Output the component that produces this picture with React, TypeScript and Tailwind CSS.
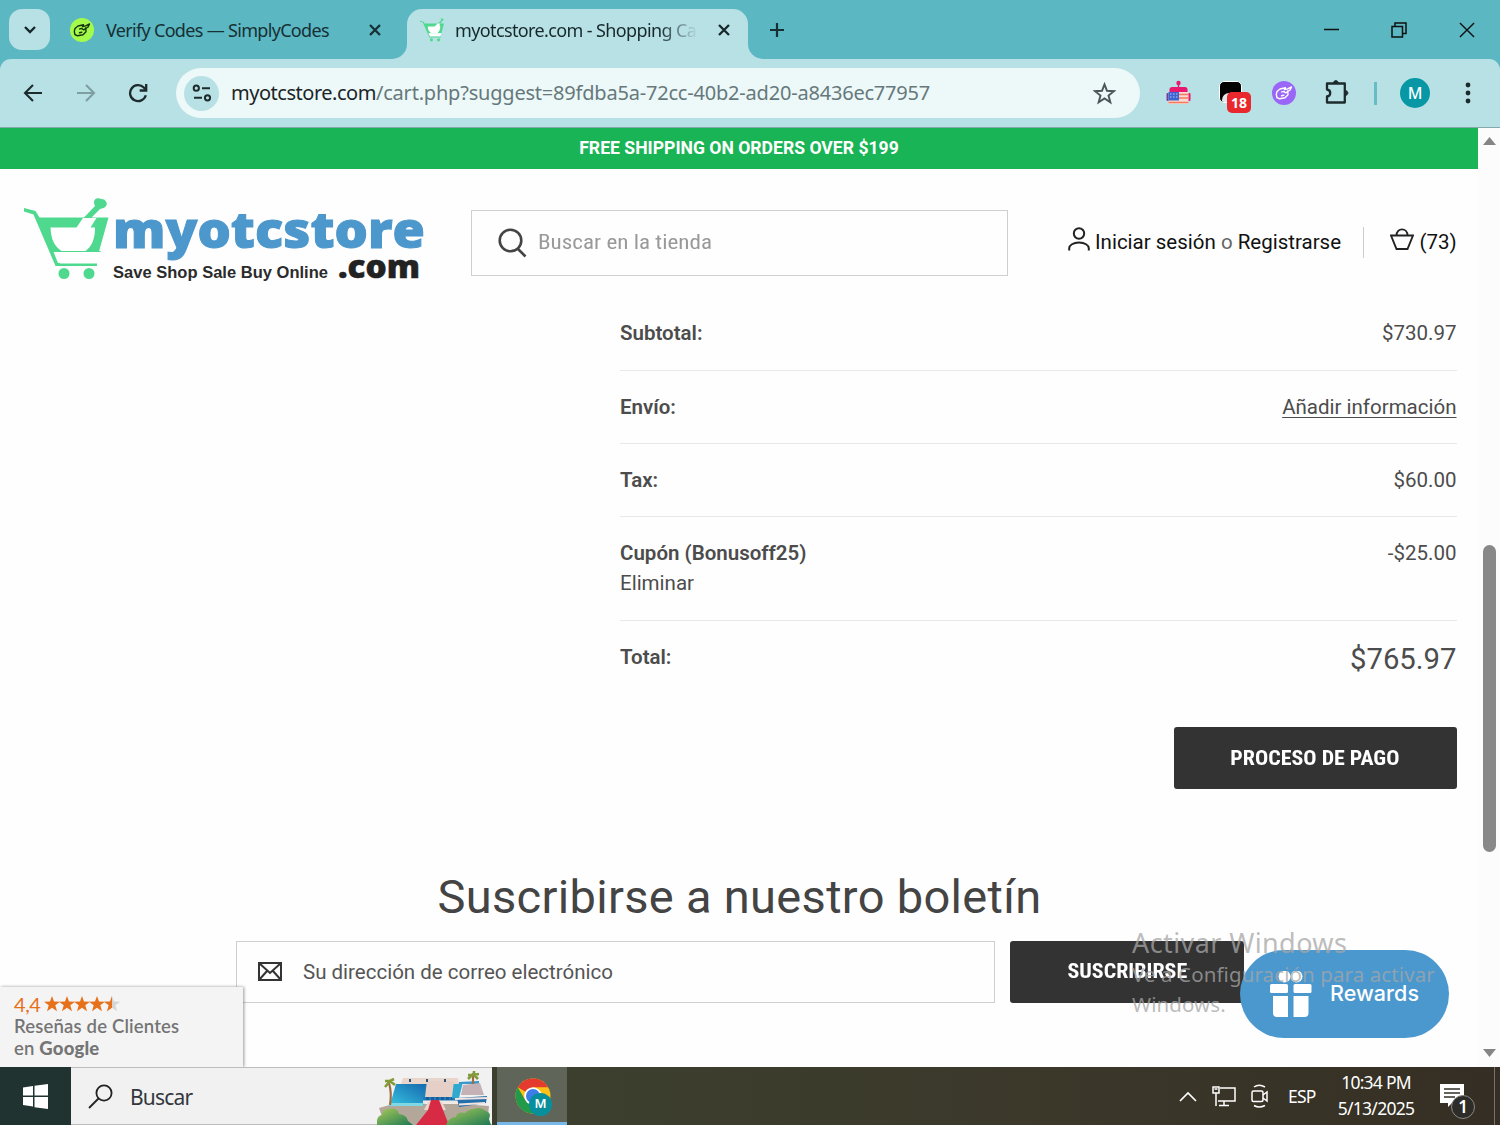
import React from "react";

const ui = "font-['Noto_Sans',sans-serif]";

function Hand({ className, color }: { className?: string; color: string }) {
  return (
    <svg viewBox="0 0 24 24" className={className} fill="none" stroke={color} strokeWidth="1.400" strokeLinejoin="round" strokeLinecap="round">
      <path d="M5 10.500 8 8l5.500-1.200-1 1.900 3.200-.9L19.500 6l-1.400 3-2.300 1.500.2 3.300-3 3-5.400 1-2.700-1.300-.6-3.200z" />
      <path d="M9.500 11c1.300-.8 2.900-.4 3.500.4s2.100.1 2.500-1.400M9.500 14.800l2.300-.6" />
    </svg>
  );
}

function Cart({ className }: { className?: string }) {
  return (
    <svg viewBox="0 0 84 84" className={className}>
      <path d="M0 10 12 13.500 16 19.500H62L75 8C70 4 73 0 78 1.500 84 3 84 8 79 10L71 19.500H84L75 53H30L35 65H73V68.500H33L10 16 0 13.500Z" fill="#4fd98f" />
      <path d="M27 29.500H51L62 19.500H71C67 25 68 28 71 29.500 71 40 68 47 61 53H40C31 48 28 41 27 29.500Z" fill="#fff" />
      <path d="M29.500 53.500H75L71 64H35Z" fill="#fff" />
      <circle cx="40" cy="76.500" r="5.500" fill="#4fd98f" />
      <circle cx="65" cy="76.500" r="5.500" fill="#4fd98f" />
    </svg>
  );
}

function Logo() {
  return (
    <svg width="404" height="92" viewBox="0 0 404 92" className="shrink-0">
      <g fill="#4fd98f">
        <path d="M0 11 11.500 14 15.500 20.500H60L71 9C68.500 4 71 1 74.500 1.200L80 2.500C84 5 83.500 9 79.500 11L76 12 67.500 20.500H84.500L75 54.500H32L36 66.500H73V69H31.500L9.500 17.500 0 14.500Z" />
        <circle cx="40" cy="76.500" r="5.500" />
        <circle cx="65" cy="76.500" r="5.500" />
      </g>
      <path d="M26.500 30.500H52.500L59 21H72.500L66.500 30.500H71C71 41 68.500 49 61 54.500H38C30 49 27 42 26.500 30.500Z" fill="#fff" />
      <path d="M29.500 55H75.500L72.500 66H34Z" fill="#fff" />
      <path d="M29 54.500H76.500" stroke="#4fd98f" strokeWidth="1" />
      <text x="89" y="50.500" textLength="312" lengthAdjust="spacingAndGlyphs" fill="#4c97cc" stroke="#4c97cc" strokeWidth="1" className="font-['Open_Sans',sans-serif] text-[50px] font-extrabold">myotcstore</text>
      <text x="89" y="81" textLength="215" lengthAdjust="spacing" fill="#2b2b2b" className="font-['Liberation_Sans',sans-serif] text-[16.500px] font-bold">Save Shop Sale Buy Online</text>
      <text x="314" y="81" textLength="82" lengthAdjust="spacingAndGlyphs" fill="#222" stroke="#222" strokeWidth="0.500" className="font-['Open_Sans',sans-serif] text-[31px] font-extrabold">.com</text>
    </svg>
  );
}

function BrowserTabs() {
  return (
    <div className="flex h-[59px] bg-[#b8e1e5]">
      <div className="flex w-[407px] items-center rounded-br-[15px] bg-[#5bb7c2] pl-[9px]">
        <div className="flex h-[41px] w-[41px] items-center justify-center rounded-[13px] bg-[#b8e1e5]">
          <svg width="14" height="10" viewBox="0 0 14 10" fill="none" stroke="#16282b" strokeWidth="2.400"><path d="m2 2 5 5 5-5" /></svg>
        </div>
        <div className="ml-[20px] h-6 w-6 rounded-full bg-[#a3fb4b]"><Hand className="h-6 w-6" color="#17340f" /></div>
        <span className="ml-[12px] w-[262px] whitespace-nowrap pt-[2px] text-[18px] tracking-[-0.680px] text-[#173034]">Verify Codes — SimplyCodes</span>
        <svg width="14" height="14" viewBox="0 0 14 14" stroke="#173034" strokeWidth="2.300"><path d="m2 2 10 10M12 2 2 12" /></svg>
      </div>
      <div className="w-[341px] bg-[linear-gradient(#5bb7c2_50%,#b8e1e5_50%)] pt-[9px]">
        <div className="flex h-[50px] items-center rounded-t-[15px] bg-[#b8e1e5] pb-[8px] pl-[13px]">
          <Cart className="h-6 w-6" />
          <span className="ml-[11px] w-[243px] overflow-hidden whitespace-nowrap pt-px text-[18px] tracking-[-0.620px] text-[#16282b] [mask-image:linear-gradient(to_right,#000_84%,transparent_100%)]">myotcstore.com - Shopping Cart</span>
          <svg className="ml-[19px]" width="14" height="14" viewBox="0 0 14 14" stroke="#16282b" strokeWidth="2.300"><path d="m2 2 10 10M12 2 2 12" /></svg>
        </div>
      </div>
      <div className="flex flex-1 items-center rounded-bl-[15px] bg-[#5bb7c2] pl-[21px] pr-[25px]">
        <svg width="16" height="16" viewBox="0 0 16 16" stroke="#173034" strokeWidth="2.200"><path d="M8 1v14M1 8h14" /></svg>
        <div className="ml-auto flex items-center gap-[52px]">
          <svg width="16" height="16" viewBox="0 0 16 16" stroke="#111" strokeWidth="1.500"><path d="M1 7.500h15" /></svg>
          <svg width="16" height="16" viewBox="0 0 16 16" fill="none" stroke="#111" strokeWidth="1.500"><path d="M1 4.500h10.500V15H1zM4 4.500V1h11v10.500h-3.500" /></svg>
          <svg width="16" height="16" viewBox="0 0 17 17" stroke="#111" strokeWidth="1.500"><path d="m1 1 15 15M16 1 1 16" /></svg>
        </div>
      </div>
    </div>
  );
}

function Toolbar() {
  return (
    <div className="bg-[#5bb7c2]">
      <div className="flex h-[69px] items-center rounded-t-[11px] border-b border-[#86a9ab] bg-[#b8e1e5] pl-[23px]">
        <svg width="20" height="18" viewBox="0 0 20 18" fill="none" stroke="#1d2b2d" strokeWidth="2.100"><path d="M19 9H2.500M10 1 2 9l8 8" /></svg>
        <svg className="ml-[33px]" width="20" height="18" viewBox="0 0 20 18" fill="none" stroke="#7f9ea2" strokeWidth="2.100"><path d="M1 9h16.500M10 1l8 8-8 8" /></svg>
        <svg className="ml-[32px]" width="20" height="20" viewBox="0 0 20 20" fill="none" stroke="#1d2b2d" strokeWidth="2.300"><path d="M17.800 12.300A8 8 0 1 1 15.800 4.500L18 7" /><path d="M18.200 1v6.500h-6.500" /></svg>
        <div className="ml-[28px] flex h-[50px] w-[964px] items-center rounded-full bg-[#edf8f9] pl-[8px]">
          <div className="flex h-[35px] w-[35px] items-center justify-center rounded-full bg-[#b8e1e5]">
            <svg width="20" height="18" viewBox="0 0 20 18" fill="none" stroke="#1d2b2d" strokeWidth="2"><circle cx="4.300" cy="4.200" r="2.600" /><path d="M10 4.200h8M2 13.800h8" /><circle cx="15.500" cy="13.800" r="2.600" /></svg>
          </div>
          <span className="ml-[12px] w-[862px] whitespace-nowrap text-[20px] tracking-[-0.260px] text-[#66787b]"><span className="tracking-[-0.480px] text-[#1b2527]">myotcstore.com</span><span className="tracking-[-0.200px]">/cart.php?suggest=89fdba5a-72cc-40b2-ad20-a8436ec77957</span></span>
          <svg width="23" height="23" viewBox="0 0 24 24" fill="none" stroke="#4c5558" strokeWidth="2"><path d="m12 2.500 2.600 6.700 7.200.4-5.600 4.500 1.900 7-6.100-4-6.100 4 1.900-7-5.600-4.500 7.200-.4z" /></svg>
        </div>
        <svg className="ml-[26px]" width="25" height="26" viewBox="0 0 25 26">
          <circle cx="12.500" cy="3" r="2.200" fill="#e8196f" /><path d="M11.800 3h1.400v5h-1.400z" fill="#e8196f" />
          <path d="M3.500 12V9.500Q3.500 7 6 7H19q2.500 0 2.500 2.500V12z" fill="#e8196f" />
          <rect x=".5" y="13" width="3" height="8" rx="1" fill="#7b3d9c" /><rect x="21.500" y="13" width="3" height="8" rx="1" fill="#e8196f" />
          <path d="M2.500 12h20v12h-20z" fill="#f8d9d4" /><path d="M13 14.500h9.500M13 18h9.500M2.500 22.500h20" stroke="#f07c5c" strokeWidth="1.700" />
          <path d="M2.500 12H13v8.500H2.500z" fill="#3d63d0" /><path d="M4 14h8M4 17h8" stroke="#b9c9f4" strokeDasharray="1.500 1.500" />
        </svg>
        <div className="relative ml-[28px] h-6 w-6">
          <div className="h-[22px] w-[23px] overflow-hidden rounded-[5px] border border-white bg-black"><div className="mt-[11px] ml-[2px] h-[14px] w-[22px] rounded-full bg-[#e2e7e7]" /></div>
          <div className="absolute left-[8px] top-[11px] flex h-[21px] w-[24px] items-center justify-center rounded-[5px] bg-[#e9282e] text-[14px] font-bold text-white">18</div>
        </div>
        <div className="ml-[29px] h-6 w-6 rounded-full bg-[#9a66f8]"><Hand className="h-6 w-6" color="#fff" /></div>
        <svg className="ml-[28px] mb-[3px]" width="26" height="26" viewBox="0 0 26 26" fill="none" stroke="#1d2b2d" strokeWidth="2.300" strokeLinejoin="round"><path d="M3 4.500H20.800V23.500H3v-6c4.300-.5 4.300-6.500 0-7z" /><path d="M9.500 4c.2-3.200 4.500-3.200 4.700 0zM21.300 11.500c3.400.4 3.400 4.600 0 5z" fill="#1d2b2d" strokeWidth="1" /></svg>
        <div className="ml-[24px] h-[23px] w-[3px] bg-[#65bdc6]" />
        <div className="ml-[23px] flex h-[30px] w-[30px] items-center justify-center rounded-full bg-[#0797a5] text-[16px] font-medium text-white">M</div>
        <svg className="ml-[35px]" width="6" height="22" viewBox="0 0 6 22" fill="#1d2b2d"><circle cx="3" cy="3" r="2.400" /><circle cx="3" cy="11" r="2.400" /><circle cx="3" cy="19" r="2.400" /></svg>
      </div>
    </div>
  );
}

function StoreHeader() {
  return (
    <div className="flex h-[128px] pl-[24px]">
      <div className="pt-[28px]"><Logo /></div>
      <div className="ml-[43px] mt-[41px] flex h-[66px] w-[537px] items-center border-[1.5px] border-[#cfcfcf] pl-[26px]">
        <svg width="29" height="30" viewBox="0 0 29 30" fill="none" stroke="#444" strokeWidth="2.600"><circle cx="12.500" cy="12.500" r="10.800" /><path d="m20 21 7.500 7.500" /></svg>
        <span className="ml-[11px] origin-left scale-x-[1.1] whitespace-nowrap text-[21px] text-[#999] [font-stretch:75%]">Buscar en la tienda</span>
      </div>
      <div className="ml-[60px] flex h-[146px] items-center text-[20.500px] text-[#111]">
        <svg className="mb-[6px]" width="22" height="24" viewBox="0 0 22 24" fill="none" stroke="#222" strokeWidth="2"><circle cx="11" cy="6.500" r="5.200" /><path d="M1.200 23.500v-2.200c0-3 4-5.800 9.800-5.800s9.800 2.800 9.800 5.800v2.200" /></svg>
        <span className="ml-[5px] w-[247px] whitespace-nowrap">Iniciar sesión <span className="text-[#666]">o</span> Registrarse</span>
        <div className="ml-[21px] h-[31px] w-px bg-[#ccc]" />
        <svg className="ml-[26px] mb-[6px]" width="24" height="22" viewBox="0 0 24 22" fill="none" stroke="#222" strokeWidth="1.900"><path d="M1 7.500h22L17.500 21h-11zM6.500 7.500C6.500-.700 17.500-.700 17.500 7.500" /></svg>
        <span className="ml-[5.500px]">(73)</span>
      </div>
    </div>
  );
}

function Row({ label, children, last }: { label: string; children: React.ReactNode; last?: boolean }) {
  return (
    <div className={last ? "flex h-[72px] items-center justify-between" : "flex h-[73.400px] items-center justify-between border-b-[1.500px] border-[#e9e9e9]"}>
      <b className="font-semibold">{label}</b>
      {children}
    </div>
  );
}

function Totals() {
  return (
    <div className="ml-[620px] w-[836.500px] pt-[0.300px] text-[20.500px] leading-[30px] text-[#4c4c4c]">
      <Row label="Subtotal:"><span>$730.97</span></Row>
      <Row label="Envío:"><span className="underline decoration-1 underline-offset-[3px]">Añadir información</span></Row>
      <Row label="Tax:"><span>$60.00</span></Row>
      <div className="flex h-[104px] justify-between border-b-[1.500px] border-[#e9e9e9] pt-[20.500px]">
        <div><b className="block font-semibold">Cupón (Bonusoff25)</b><span className="block pt-[0.500px]">Eliminar</span></div>
        <span>-$25.00</span>
      </div>
      <Row label="Total:" last><span className="pt-[3px] text-[29.300px]">$765.97</span></Row>
      <div className="mt-[33.500px] ml-auto flex h-[62px] w-[283px] items-center justify-center rounded-[3px] bg-[#333]">
        <span className="scale-x-[1.045] whitespace-nowrap text-[21px] font-bold text-white [font-stretch:75%]">PROCESO DE PAGO</span>
      </div>
    </div>
  );
}

function Newsletter() {
  return (
    <div className="mt-[78px]">
      <h2 className="h-[60px] pl-px text-center text-[47px] leading-[60px] tracking-[0.320px] text-[#444]">Suscribirse a nuestro boletín</h2>
      <div className="mt-[14px] flex pl-[236px]">
        <div className="flex h-[62px] w-[759px] items-center border-[1.500px] border-[#cfcfcf] pl-[21px]">
          <svg width="24" height="19" viewBox="0 0 24 19" fill="none" stroke="#333" strokeWidth="2"><path d="M1 1h22v17H1zM1 1l11 10L23 1M1 18l8-9M23 18l-8-9" /></svg>
          <span className="ml-[21px] text-[20.500px] text-[#555]">Su dirección de correo electrónico</span>
        </div>
        <div className="ml-[15px] flex h-[62px] w-[234px] items-center justify-center rounded-[3px] bg-[#333] text-[21px] font-bold text-white [font-stretch:75%]"><span className="scale-x-[1.045]">SUSCRIBIRSE</span></div>
      </div>
    </div>
  );
}

function ReviewsBadge() {
  const star = "m8 0 2 5.600 6 .100-4.700 3.600 1.700 5.900L8 11.700l-5 3.500 1.700-5.900L0 5.700l6-.1z";
  return (
    <div className="absolute bottom-0 left-0 h-[80px] w-[243px] bg-[#f4f4f4] pl-[14px] pt-[6px] font-['Lato',sans-serif] text-[#757575] shadow-[1px_0_3px_rgba(0,0,0,0.4)]">
      <div className="flex h-[22px] items-center text-[20px] text-[#e7711b]">
        <span className="w-[30px] tracking-[-0.400px]">4,4</span>
        <svg width="76" height="16" viewBox="0 0 76 16" fill="#e7711b">
          <path d={star} /><path d={star} transform="translate(15)" /><path d={star} transform="translate(30)" /><path d={star} transform="translate(45)" />
          <path d={star} transform="translate(60)" fill="#d5d5d5" /><path d="m68 0v11.700l-5 3.500 1.700-5.900L60 5.700l6-.1z" />
        </svg>
      </div>
      <div className="whitespace-nowrap text-[18.500px] font-semibold leading-[22px] tracking-[0.170px]">Reseñas de Clientes<br />en <b>Google</b></div>
    </div>
  );
}

function Overlays() {
  return (
    <>
      <ReviewsBadge />
      <div className="absolute left-[1240px] top-[822px] flex h-[88px] w-[209px] items-center rounded-full bg-[#4b98cf] pl-[30px]">
        <svg width="42" height="46" viewBox="0 0 42 46" fill="#fff"><circle cx="14.500" cy="5.500" r="6" /><circle cx="26.500" cy="5.500" r="6" /><rect y="13" width="18" height="9" rx="1.500" /><rect x="23.500" y="13" width="18" height="9" rx="1.500" /><path d="M3 25h15v21H7q-4 0-4-4zM23.500 25h15v17q0 4-4 4h-11z" /></svg>
        <span className="ml-[18px] pb-[2px] font-['Inter',sans-serif] text-[21.500px] font-medium tracking-[0.050px] text-white">Rewards</span>
      </div>
      <div className="absolute left-[1132px] top-[799px] whitespace-nowrap font-['Noto_Sans',sans-serif] text-[#a6a6a6]/75">
        <div className="text-[27px] leading-[31px] tracking-[0.400px]">Activar Windows</div>
        <div className="pt-[2px] text-[20.500px] leading-[29.500px] tracking-[0.100px]">Ve a Configuración para activar<br />Windows.</div>
      </div>
    </>
  );
}

function Scrollbar() {
  return (
    <div className="flex w-[22px] flex-col items-center bg-[#fcfcfc] pt-[9px] pb-[10px]">
      <svg width="13" height="8" viewBox="0 0 13 8" fill="#858585"><path d="M0 8 6.500 0 13 8z" /></svg>
      <div className="mt-[400px] h-[307px] w-[13px] rounded-full bg-[#888]" />
      <svg className="mt-auto" width="13" height="8" viewBox="0 0 13 8" fill="#858585"><path d="M0 0 6.500 8 13 0z" /></svg>
    </div>
  );
}

function Villa() {
  return (
    <svg width="115" height="54" viewBox="0 0 115 54">
      <defs>
        <linearGradient id="pool" x1="0" y1="1" x2="1" y2="0"><stop offset="0" stopColor="#36c2df" /><stop offset="1" stopColor="#1466ad" /></linearGradient>
        <linearGradient id="bush" x1="0" y1="0" x2="1" y2="1"><stop offset="0" stopColor="#a9c957" /><stop offset="1" stopColor="#1d7a55" /></linearGradient>
      </defs>
      <path d="M2 37 16 33H84L112 35 110 54H8z" fill="#b3a79a" />
      <path d="M19 13H51L47 34H13z" fill="url(#pool)" />
      <path d="M13 32H47L46 35H12z" fill="#7fd8e4" />
      <path d="M48 14H82L81 30H46z" fill="#1f7cb8" /><path d="M76 13 86 11 82 27H74z" fill="#2fa9cf" />
      <path d="M26 7H81L82 13H24z" fill="#ead5cb" /><path d="M50 10H77L75 26H48z" fill="#e6cfc6" />
      <path d="M33 8v3M50 8v3M68 8v3" stroke="#26547e" strokeWidth="2" />
      <path d="M49 27.500H75" stroke="#1a5d9c" strokeWidth="3" strokeDasharray="3 2" />
      <path d="M46 31H82" stroke="#f3e7e2" strokeWidth="3" />
      <path d="M82 11 102 10V13H82z" fill="#3b98cb" /><path d="M86 14 103 12 107 24H84z" fill="#c5b2b7" />
      <path d="M80 27 110 25 109 32 82 36z" fill="#236fac" /><path d="M78 28 111 27M82 33.500 108 32" stroke="#f2e3de" strokeWidth="2" />
      <path d="M51 31H65L69 39H47z" fill="#ead5cb" /><path d="M54 29H62L72 54H39L51 39z" fill="#d72b45" />
      <path d="M13 34Q15 22 12 12M96 13V5" stroke="#9b6e44" strokeWidth="2.200" fill="none" />
      <path d="M8 16 13 10 18 14M8 10 13 10 17 8M91 8 96 3 101 8M91 4 96 4 102 3M97 3V0" stroke="#829a37" strokeWidth="2.600" fill="none" />
      <path d="M0 54Q-1 45 5 44 5 38 12 38 20 36 22 43 30 44 31 50L36 54z" fill="url(#bush)" />
      <path d="M69 54Q72 46 79 46 80 40 88 42 92 38 97 38 103 35 109 40 115 42 112 48L114 54z" fill="url(#bush)" />
    </svg>
  );
}

function Taskbar() {
  return (
    <div className="flex h-[58px] bg-[linear-gradient(to_right,#3c3f2e_38%,#3b382a_70%,#352e24)] text-white">
      <div className="flex w-[71px] items-center justify-center bg-[#203331]">
        <svg width="25" height="25" viewBox="0 0 25 25" fill="#fff"><path d="M0 3.500 10 2v9.500H0zM11.500 1.800 25 0v11.500H11.500zM0 13h10v9.500L0 21zM11.500 13H25v12l-13.500-1.800z" /></svg>
      </div>
      <div className="flex w-[421px] items-center border-y border-[#bdbdbd] bg-[#f1f1f1] pl-[17px] text-[#32373d]">
        <svg width="25" height="25" viewBox="0 0 25 25" fill="none" stroke="#222" strokeWidth="1.800"><circle cx="16" cy="9" r="7.600" /><path d="M10.500 14.500 1 24" /></svg>
        <span className="ml-[17px] pt-[3px] text-[21px] tracking-[-0.800px]">Buscar</span>
        <div className="ml-auto mt-[4px]"><Villa /></div>
      </div>
      <div className="ml-[5px] flex w-[70px] items-center justify-center border-b-[3px] border-[#77b8e8] bg-[#60655a]">
        <div className="relative ml-[2px] mt-[3px] h-[37px] w-[36px]">
          <svg width="36" height="36" viewBox="0 0 36 36">
            <circle cx="18" cy="18" r="17.500" fill="#fbc116" />
            <path d="M18 18 2.800 9.300A17.500 17.500 0 0 1 33.200 9.300H18z" fill="#e33b2e" />
            <path d="M2.800 9.300A17.500 17.500 0 0 0 18 35.500L25.500 22.500H10.500z" fill="#229a49" />
            <circle cx="18" cy="18" r="8.800" fill="#fff" /><circle cx="18" cy="18" r="7" fill="#3c7de8" />
          </svg>
          <div className="absolute left-[14px] top-[15px] flex h-[23px] w-[23px] items-center justify-center rounded-full bg-[#078f9c] text-[13px] font-semibold">M</div>
        </div>
      </div>
      <div className="ml-auto flex items-center">
        <svg width="18" height="11" viewBox="0 0 18 11" fill="none" stroke="#fff" strokeWidth="1.700"><path d="m1 10 8-8 8 8" /></svg>
        <svg className="ml-[15px]" width="24" height="21" viewBox="0 0 24 21" fill="none" stroke="#fff" strokeWidth="1.500"><path d="M8 2h15v13H6M12 15v4M7 19.500h10M1 1h6v6H1zM4 7v13M2.500 3h3" /></svg>
        <svg className="ml-[15px]" width="18" height="24" viewBox="0 0 18 24" fill="none" stroke="#fff" strokeWidth="1.500"><rect x="1" y="7" width="11" height="10.500" rx="1.500" /><path d="m12 11 4-3v9l-4-3M3 3Q8-.500 14 3M3 21.500q5 3 11 0" /></svg>
        <span className="ml-[19px] w-[28px] text-[17.500px] tracking-[-0.8px]">ESP</span>
        <div className="ml-[21px] w-[78px] whitespace-nowrap pb-[2px] text-center text-[17.500px] leading-[26px] tracking-[-0.750px]">10:34 PM<br />5/13/2025</div>
        <div className="relative ml-[25px] h-[40px] w-[36px]">
          <svg className="mt-[8px]" width="24" height="24" viewBox="0 0 24 24"><path d="M0 0h24v19H12l-4 4v-4H0z" fill="#fff" /><path d="M4 5h16M4 9h16M4 13h11" stroke="#343127" strokeWidth="1.500" /></svg>
          <div className="absolute left-[11px] top-[19px] flex h-[24px] w-[24px] items-center justify-center rounded-full border-[1.500px] border-[#8a8a86] bg-[#2d2c28] text-[17px] font-semibold">1</div>
        </div>
        <div className="ml-[18px] h-[58px] w-px bg-[#77736a]" />
        <div className="w-[5px]" />
      </div>
    </div>
  );
}

export default function App() {
  return (
    <div className={`h-[1125px] w-[1500px] overflow-hidden bg-white ${ui}`}>
      <BrowserTabs />
      <Toolbar />
      <div className="flex h-[939px]">
        <div className="relative w-[1478px] overflow-hidden bg-[#fefefe] font-['Roboto',sans-serif]">
          <div className="flex h-[41px] items-center justify-center bg-[#18b455] text-[17.600px] font-bold text-white">FREE SHIPPING ON ORDERS OVER $199</div>
          <StoreHeader />
          <Totals />
          <Newsletter />
          <Overlays />
        </div>
        <Scrollbar />
      </div>
      <Taskbar />
    </div>
  );
}
